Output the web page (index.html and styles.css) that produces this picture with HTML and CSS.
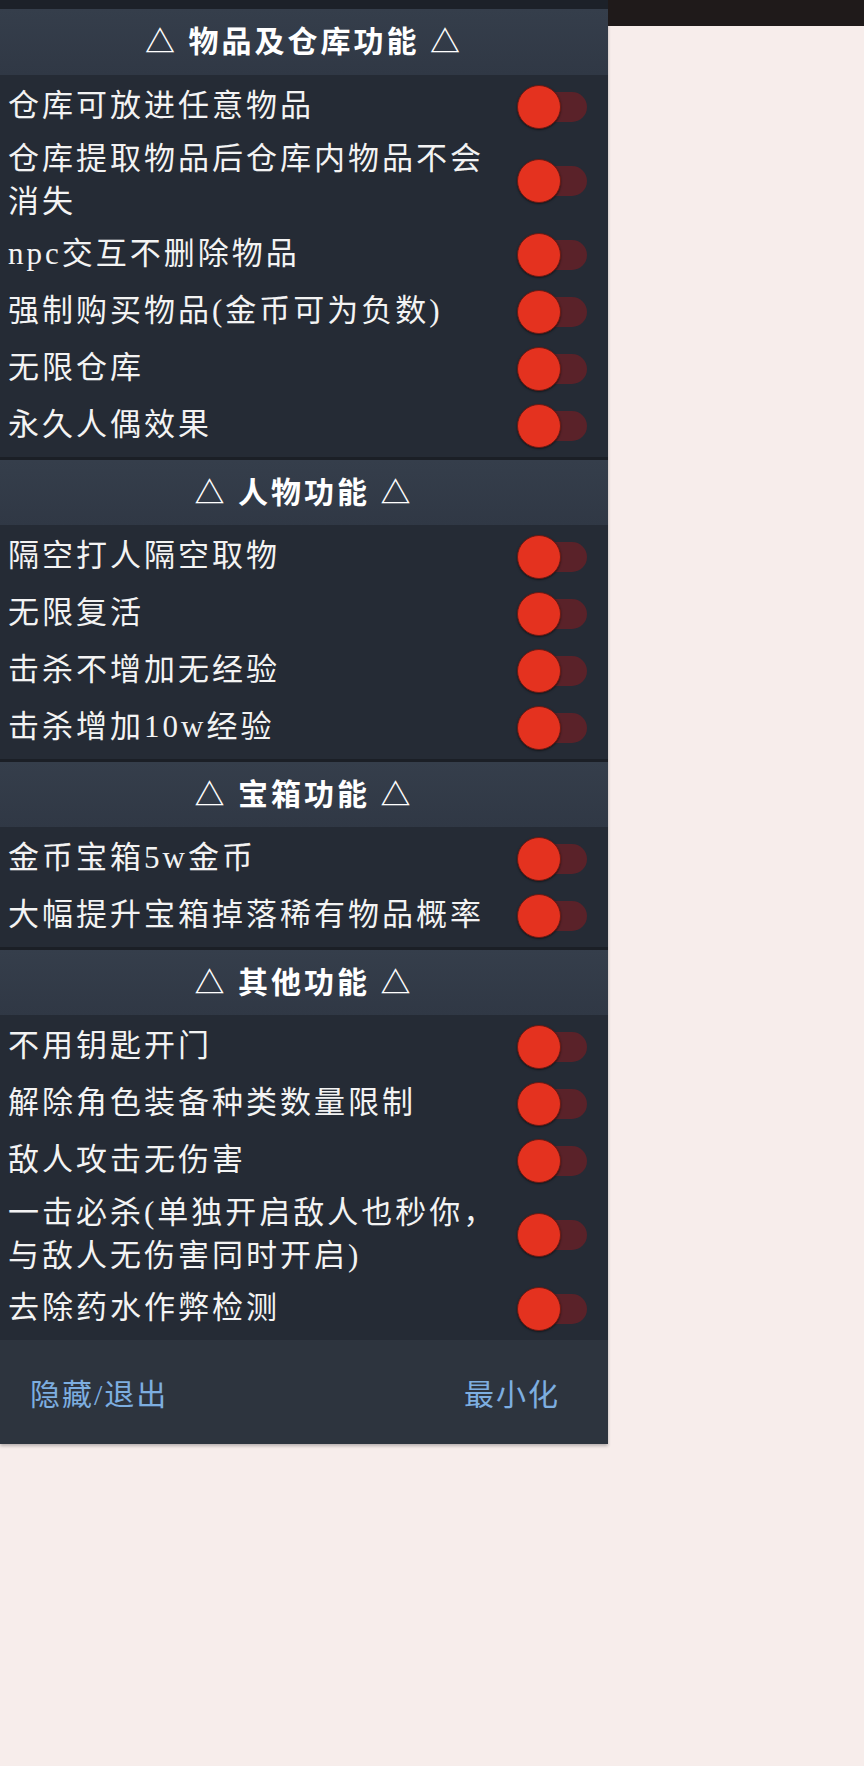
FILE: index.html
```html
<!DOCTYPE HTML>
<html>
<head>
    <meta charset="UTF-8">
    <title>功能菜单</title>
    <link rel="stylesheet" href="styles.css">
</head>
<body>
<div class="screen">

    <div class="panel">
        <div class="clip"></div>

        <div class="group">
            <div class="head first">△ 物品及仓库功能 △</div>
            <ul class="list">
                <li><span class="label">仓库可放进任意物品</span><span class="switch"><i></i></span></li>
                <li><span class="label">仓库提取物品后仓库内物品不会消失</span><span class="switch"><i></i></span></li>
                <li><span class="label">npc交互不删除物品</span><span class="switch"><i></i></span></li>
                <li><span class="label">强制购买物品(金币可为负数)</span><span class="switch"><i></i></span></li>
                <li><span class="label">无限仓库</span><span class="switch"><i></i></span></li>
                <li><span class="label">永久人偶效果</span><span class="switch"><i></i></span></li>
            </ul>
        </div>

        <div class="group">
            <div class="head">△ 人物功能 △</div>
            <ul class="list">
                <li><span class="label">隔空打人隔空取物</span><span class="switch"><i></i></span></li>
                <li><span class="label">无限复活</span><span class="switch"><i></i></span></li>
                <li><span class="label">击杀不增加无经验</span><span class="switch"><i></i></span></li>
                <li><span class="label">击杀增加10w经验</span><span class="switch"><i></i></span></li>
            </ul>
        </div>

        <div class="group">
            <div class="head">△ 宝箱功能 △</div>
            <ul class="list">
                <li><span class="label">金币宝箱5w金币</span><span class="switch"><i></i></span></li>
                <li><span class="label">大幅提升宝箱掉落稀有物品概率</span><span class="switch"><i></i></span></li>
            </ul>
        </div>

        <div class="group">
            <div class="head">△ 其他功能 △</div>
            <ul class="list">
                <li><span class="label">不用钥匙开门</span><span class="switch"><i></i></span></li>
                <li><span class="label">解除角色装备种类数量限制</span><span class="switch"><i></i></span></li>
                <li><span class="label">敌人攻击无伤害</span><span class="switch"><i></i></span></li>
                <li><span class="label">一击必杀(单独开启敌人也秒你，与敌人无伤害同时开启)</span><span class="switch"><i></i></span></li>
                <li><span class="label">去除药水作弊检测</span><span class="switch"><i></i></span></li>
            </ul>
        </div>

        <div class="foot">
            <span class="btn">隐藏/退出</span>
            <span class="btn">最小化</span>
        </div>
    </div>

    <div class="side">
        <div class="topbar"></div>
    </div>

</div>
</body>
</html>
```

FILE: styles.css
```css
body{margin:0;background:#f7edeb;font-family:"Liberation Serif","Noto Sans CJK SC",serif;}
ul,li{margin:0;padding:0;list-style:none;}

.screen{
    display: flex;
    align-items: flex-start;
    min-height: 1766px;
}
.panel{
    width: 608px;
    flex-shrink: 0;
    background: #252b35;
    box-shadow: 0 2px 3px rgba(0,0,0,.25);
}
.clip{
    height: 9px;
    background: #1c2129;
}
.side{
    flex: 1;
}
.topbar{
    height: 26px;
    background: #1f1a1a;
}

.head{
    height: 65px;
    border-top: 3px solid #1b1f26;
    background: linear-gradient(#353e4b, #303845);
    color: #fff;
    font-size: 30px;
    font-weight: bold;
    letter-spacing: 3px;
    line-height: 65px;
    text-align: center;
}
.head.first{
    border-top: none;
    height: 66px;
    line-height: 66px;
}

.list{
    padding: 3px 0;
    background: #252b35;
}
.list li{
    display: flex;
    align-items: center;
    min-height: 57px;
    padding: 0 21px 0 8px;
}
.list .label{
    flex: 1;
    padding: 3px 0;
    color: #f3f3f3;
    font-size: 31px;
    letter-spacing: 3px;
    line-height: 42.5px;
}
.switch{
    position: relative;
    width: 62px;
    height: 30px;
    margin-left: 12px;
    border-radius: 15px;
    background: #5a2229;
}
.switch i{
    position: absolute;
    left: -8px;
    top: -7px;
    width: 42px;
    height: 42px;
    border: 1px solid #6e1a14;
    border-radius: 50%;
    background: #e4321f;
    box-shadow: 0 1px 2px rgba(0,0,0,.5);
}

.foot{
    display: flex;
    justify-content: space-between;
    align-items: center;
    height: 104px;
    padding: 0 48px 0 30px;
    background: #2d343e;
}
.foot .btn{
    color: #7daee0;
    font-size: 30px;
    letter-spacing: 2px;
}
```
